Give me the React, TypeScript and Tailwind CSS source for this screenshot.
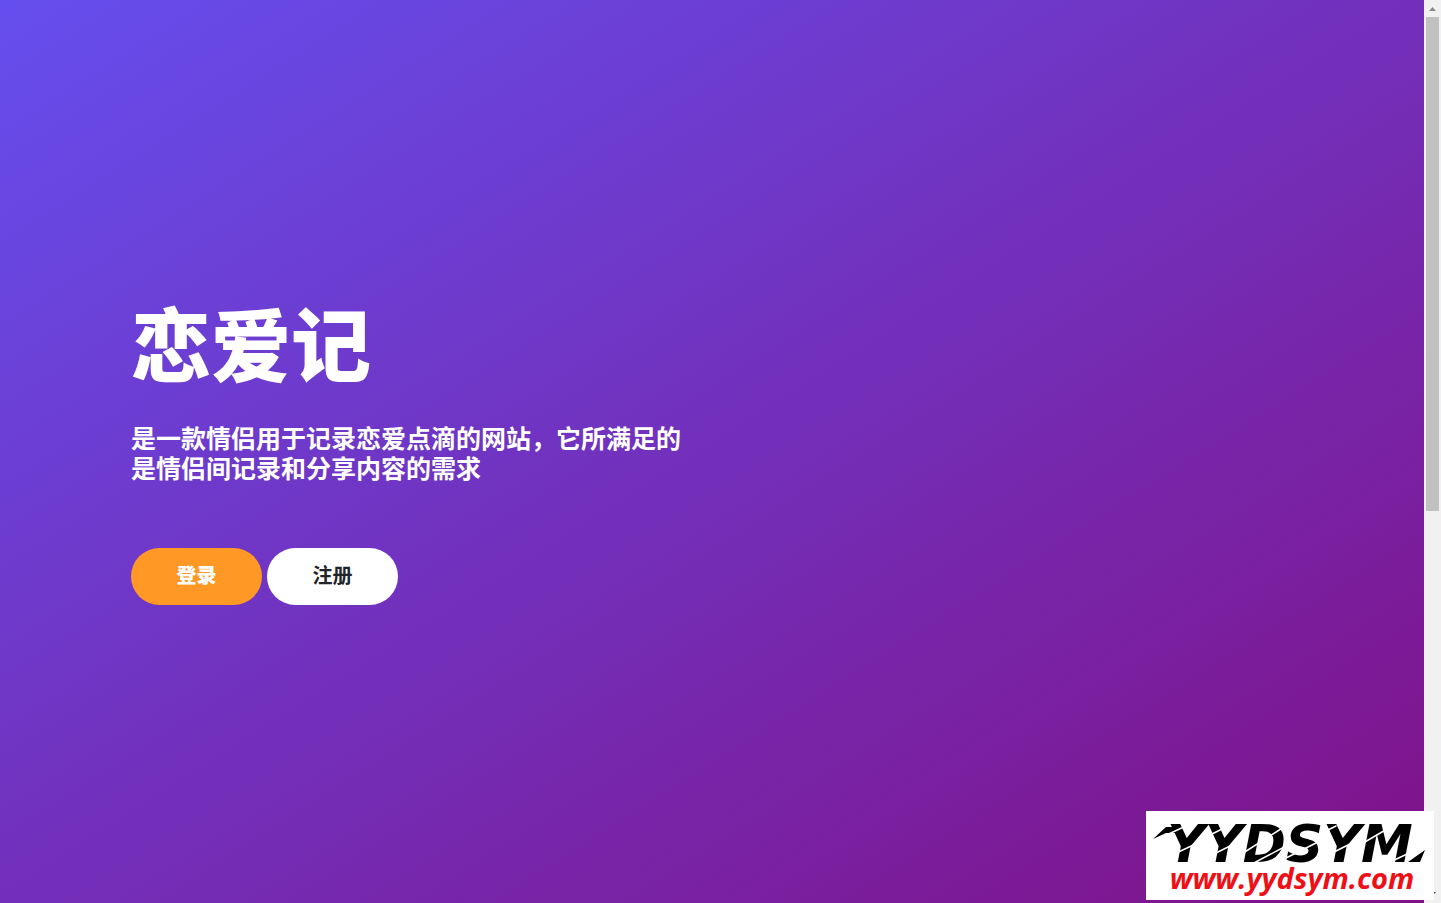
/** Claw marks over the wordmark: black splinters first, then the cuts in the card's own white. */
function Scratches() {
  return (
    <svg
      aria-hidden="true"
      className="pointer-events-none absolute inset-0 h-full w-full"
      viewBox="0 0 288 89"
      fill="none"
      strokeLinecap="round"
    >
      <g fill="#000">
        <path d="M7 28 20 16H36L30 22 20 22z" />
        <path d="M262 51 279 39 274 51z" />
      </g>
      <g stroke="#fff" strokeWidth="1.5">
        <path d="M12 28 42 14M26 44 56 30" />
        <path d="M56 28 84 14M62 46 94 30" />
        <path d="M94 44 138 16M106 53 142 34" />
        <path d="M134 50 174 30M164 28 190 15" />
        <path d="M178 46 208 31M212 35 248 14M242 52 276 36" />
      </g>
    </svg>
  )
}

function SiteBadge() {
  return (
    <a
      href="#home"
      className="absolute right-[7px] bottom-[3px] flex h-[89px] w-[288px] flex-col items-center bg-white pt-[13px] whitespace-nowrap"
    >
      <span className="font-['DejaVu_Sans'] text-[52px] leading-10 font-bold text-black italic">YYDSYM</span>
      <span className="pl-1 font-['Open_Sans'] text-[29px] leading-7 font-bold text-[#ee1016] italic">www.yydsym.com</span>
      <Scratches />
    </a>
  )
}

function ScrollRail() {
  return (
    <div aria-hidden="true" className="flex w-[17px] flex-none flex-col items-center bg-[#f1f1f1]">
      <svg className="h-[17px] w-[17px] flex-none" viewBox="0 0 17 17" fill="#8b8b8b">
        <path d="M5 11h7L8.500 7z" />
      </svg>
      <div className="h-[494px] w-[13px] bg-[#c1c1c1]" />
      <svg className="mt-auto h-[17px] w-[17px] flex-none" viewBox="0 0 17 17" fill="#505050">
        <path d="M5 6h7L8.500 10z" />
      </svg>
    </div>
  )
}

export default function App() {
  return (
    <div className="relative flex min-h-screen font-['Noto_Sans_CJK_SC',sans-serif]">
      <main className="flex flex-1 items-center bg-linear-to-br/srgb from-[#654eee] to-[#801187] bg-no-repeat">
        <div className="mx-auto w-full max-w-[1162px]">
          <h1 className="text-[80px] leading-[84px] font-black text-white">恋爱记</h1>
          <p className="mt-10 max-w-[570px] text-[25px] leading-[30px] font-bold text-white">
            是一款情侣用于记录恋爱点滴的网站，它所满足的是情侣间记录和分享内容的需求
          </p>
          <div className="mt-[66px] flex gap-[5px]">
            <button type="button" className="h-[57px] w-[131px] rounded-full bg-[#ff9825] pb-1 text-xl font-black text-white">
              登录
            </button>
            <button type="button" className="h-[57px] w-[131px] rounded-full bg-white pb-1 text-xl font-bold text-[#212529]">
              注册
            </button>
          </div>
        </div>
      </main>
      <ScrollRail />
      <SiteBadge />
    </div>
  )
}
